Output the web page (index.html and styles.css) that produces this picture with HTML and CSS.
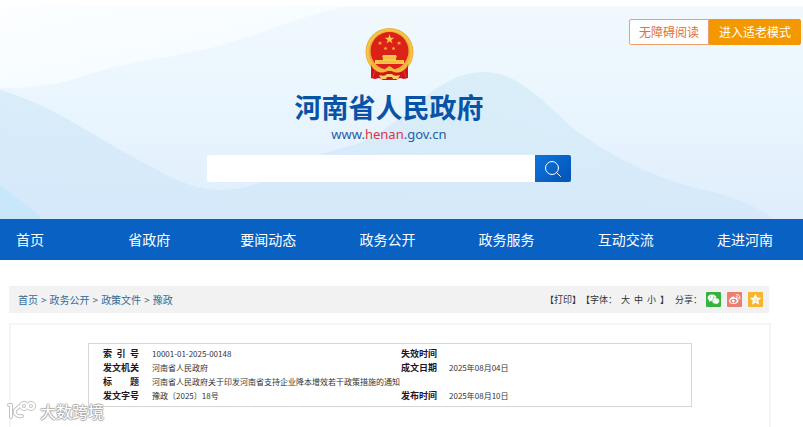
FILE: index.html
```html
<!DOCTYPE html>
<html lang="zh-CN">
<head>
<meta charset="utf-8">
<meta name="viewport" content="width=device-width, initial-scale=1">
<title>河南省人民政府</title>
<link rel="stylesheet" href="styles.css">
</head>
<body>
<header class="banner">
  <svg class="banner-art" viewBox="0 0 803 213" preserveAspectRatio="none" aria-hidden="true">
    <defs>
      <linearGradient id="sky" x1="0" y1="0" x2="0" y2="1">
        <stop offset="0" stop-color="#f1f9fd"/>
        <stop offset="0.5" stop-color="#e9f5fe"/>
        <stop offset="1" stop-color="#dfedfc"/>
      </linearGradient>
      <linearGradient id="glow" x1="0" y1="0" x2="0.9" y2="1">
        <stop offset="0" stop-color="#fcfeff"/>
        <stop offset="0.6" stop-color="#f6fcff"/>
        <stop offset="1" stop-color="#f1f9fd" stop-opacity="0"/>
      </linearGradient>
      <linearGradient id="hill" x1="0" y1="0" x2="0" y2="1">
        <stop offset="0" stop-color="#d9edf8"/>
        <stop offset="1" stop-color="#d6e9fa"/>
      </linearGradient>
      <linearGradient id="ridge" x1="0.6" y1="0" x2="0.3" y2="1">
        <stop offset="0" stop-color="#d9eef8"/>
        <stop offset="0.6" stop-color="#d6eafa"/>
        <stop offset="1" stop-color="#d5e9fa"/>
      </linearGradient>
    </defs>
    <rect width="803" height="213" fill="url(#sky)"/>
    <path d="M0 0H350C310 8 280 20 250 30C190 52 140 52 90 68C55 80 30 83 0 82Z" fill="url(#glow)"/>
    <path d="M0 84C50 98 90 128 135 152C165 168 190 184 220 184C270 184 300 150 350 140C400 128 430 66 484 66C520 66 545 98 575 124C610 150 655 172 700 183C735 190 760 203 775 213H0Z" fill="url(#ridge)" opacity="0.94"/>
    <path d="M330 150C400 125 430 105 500 112C560 120 590 160 680 213H180C240 195 270 170 330 150Z" fill="url(#hill)" opacity="0.5"/>
    <path d="M0 180C15 190 30 201 42 213H0Z" fill="#c9e7fa"/>
  </svg>

  <div class="modes">
    <button type="button" class="mode">无障碍阅读</button>
    <button type="button" class="mode mode-senior">进入适老模式</button>
  </div>

  <div class="brand">
    <svg class="emblem" viewBox="0 0 49 52" role="img" aria-label="国徽">
      <circle cx="24.500" cy="24" r="24" fill="#ecb038"/>
      <circle cx="24.500" cy="24" r="22" fill="none" stroke="#f5c54c" stroke-width="2"/>
      <circle cx="24.500" cy="23" r="19" fill="#dc2119"/>
      <path d="M24.500 6L25.600 9.700H29.300L26.300 12L27.500 15.500L24.500 13.300L21.500 15.500L22.700 12L19.700 9.700H23.400Z" fill="#f9cc4a"/>
      <path d="M15 13l.7 1.400 1.600.1-1.200 1 .4 1.500-1.500-.9-1.400.9.400-1.500-1.200-1 1.600-.1zM34 13l.7 1.400 1.600.1-1.200 1 .4 1.500-1.500-.9-1.400.9.400-1.500-1.200-1 1.600-.1zM20.500 18.500l.6 1.200 1.400.1-1 .9.300 1.300-1.300-.7-1.300.7.300-1.300-1-.9 1.400-.1zM28.500 18.500l.6 1.200 1.400.1-1 .9.300 1.300-1.300-.7-1.300.7.300-1.300-1-.9 1.400-.1z" fill="#f2b13e"/>
      <path d="M18 27h13l1 2h-1v3h8v4H10v-4h8v-3h-1z" fill="#f8c84a"/>
      <path d="M17 30h15M13 34h23" stroke="#e5a12f" stroke-width="0.600"/>
      <path d="M6 36C11 41 15 44 20 43H29C34 44 38 41 43 36L43 50L39 51L35 50L31 52H18L14 50L10 51L6 50Z" fill="#cc1715"/>
      <path d="M7 35C11 41 17 43 20 41L24.500 38L29 41C32 43 38 41 42 35L43 37C40 43 34 46 29 44L26 43H23L20 44C15 46 9 43 6 37Z" fill="#f3b93e"/>
      <path d="M14 47Q20 49 22 46H27Q29 49 35 47L33 51H28L27 49H22L21 51H16Z" fill="#f7ce63"/>
      <path d="M10 43L8 49M39 43L41 49" stroke="#e5402c" stroke-width="1"/>
    </svg>
    <h1 class="title">河南省人民政府</h1>
    <p class="domain">www.<span class="domain-name">henan</span>.gov.cn</p>
  </div>

  <form class="search" role="search">
    <input class="search-field" type="search" aria-label="搜索">
    <button class="search-button" type="submit" aria-label="搜索">
      <svg viewBox="0 0 18 18" class="search-icon" aria-hidden="true">
        <circle cx="8" cy="8" r="6.500"/>
        <path d="M12.500 12.500L16.500 16.500"/>
      </svg>
    </button>
  </form>
</header>

<nav class="nav" aria-label="主导航">
  <a href="#">首页</a>
  <a href="#">省政府</a>
  <a href="#">要闻动态</a>
  <a href="#">政务公开</a>
  <a href="#">政务服务</a>
  <a href="#">互动交流</a>
  <a href="#">走进河南</a>
</nav>

<main class="page">
  <div class="toolbar">
    <nav class="crumbs" aria-label="当前位置">
      <a href="#">首页</a><span>&gt;</span><a href="#">政务公开</a><span>&gt;</span><a href="#">政策文件</a><span>&gt;</span><a href="#">豫政</a>
    </nav>
    <div class="tools">
      <button type="button" class="tool">【打印】</button>
      <div class="sizes">
        <span>【字体：</span>
        <button type="button" class="tool">大</button>
        <button type="button" class="tool">中</button>
        <button type="button" class="tool">小</button>
        <span>】</span>
      </div>
      <span class="share-label">分享：</span>
      <div class="share">
        <a href="#" class="share-link wechat" aria-label="微信">
          <svg viewBox="0 0 15 15" aria-hidden="true">
            <path d="M6 2.500C3.500 2.500 1.700 4 1.700 5.900c0 1.100.6 2 1.600 2.600L3 10l1.700-.9c.4.100.8.200 1.300.2 2.500 0 4.400-1.500 4.400-3.400S8.500 2.500 6 2.500z" fill="#fff"/>
            <path d="M9.800 6c-2.100 0-3.800 1.300-3.800 3s1.700 3 3.800 3c.4 0 .8 0 1.200-.2l1.400.8-.3-1.300c.9-.5 1.400-1.400 1.400-2.300 0-1.700-1.600-3-3.700-3z" fill="#fff" stroke="#36b23e" stroke-width="0.500"/>
            <circle cx="4.600" cy="5" r="0.500" fill="#36b23e"/><circle cx="7.400" cy="5" r="0.500" fill="#36b23e"/>
            <circle cx="8.600" cy="8.300" r="0.400" fill="#36b23e"/><circle cx="11" cy="8.300" r="0.400" fill="#36b23e"/>
          </svg>
        </a>
        <a href="#" class="share-link weibo" aria-label="微博">
          <svg viewBox="0 0 15 15" aria-hidden="true">
            <path d="M6 4.500c-2 .5-4 2.700-4 4.500 0 1.900 2 3 4.500 3 2.800 0 5-1.500 5-3.200 0-1-.7-1.500-1.500-1.700.4-1.200-.5-1.700-2.500-.9.300-1.200-.2-1.900-1.500-1.700z" fill="#fff"/>
            <ellipse cx="6.500" cy="9" rx="3.200" ry="2.100" fill="#ea7f70" transform="rotate(-8 6.500 9)"/>
            <circle cx="6.300" cy="9.100" r="1.400" fill="#fff"/>
            <path d="M9.300 4.800c1.400-.3 2.200.5 1.900 1.800M9.200 2.700c2.600-.4 4.200 1.500 3.700 4.200" fill="none" stroke="#fff" stroke-width="0.900" stroke-linecap="round"/>
          </svg>
        </a>
        <a href="#" class="share-link qzone" aria-label="QQ空间">
          <svg viewBox="0 0 15 15" aria-hidden="true">
            <path d="M7.500 2.500L9 5.800l3.600.4-2.700 2.400.8 3.600-3.200-1.900-3.200 1.900.8-3.600-2.700-2.400L6 5.800z" fill="#fff" stroke="#fff" stroke-linejoin="round" stroke-width="0.600"/>
            <path d="M6.200 7h2.600L6.700 9h2.300" fill="none" stroke="#f6b52b" stroke-width="0.500"/>
          </svg>
        </a>
      </div>
    </div>
  </div>

  <section class="document">
    <table class="meta">
      <colgroup><col class="col-label-first"><col class="col-value"><col class="col-label"><col></colgroup>
      <tbody>
        <tr><th scope="row"><span class="label">索 引 号</span></th><td>10001-01-2025-00148</td><th scope="row"><span class="label">失效时间</span></th><td></td></tr>
        <tr><th scope="row"><span class="label">发文机关</span></th><td>河南省人民政府</td><th scope="row"><span class="label">成文日期</span></th><td>2025年08月04日</td></tr>
        <tr><th scope="row"><span class="label">标 题</span></th><td colspan="3">河南省人民政府关于印发河南省支持企业降本增效若干政策措施的通知</td></tr>
        <tr><th scope="row"><span class="label">发文字号</span></th><td>豫政〔2025〕18号</td><th scope="row"><span class="label">发布时间</span></th><td>2025年08月10日</td></tr>
      </tbody>
    </table>
  </section>
</main>

<div class="watermark">
  <svg class="watermark-logo" viewBox="0 0 30 20" aria-hidden="true">
    <g fill="none" stroke-linecap="round" stroke-linejoin="round">
      <g stroke="#c2c2c2" stroke-width="4">
        <path d="M2 4H4V16M14 4L8 9C7 13 10 16 15 15"/>
        <circle cx="17" cy="5" r="3"/><circle cx="24" cy="5" r="3"/>
      </g>
      <g stroke="#fff" stroke-width="2">
        <path d="M2 4H4V16M14 4L8 9C7 13 10 16 15 15"/>
        <circle cx="17" cy="5" r="3"/><circle cx="24" cy="5" r="3"/>
      </g>
    </g>
  </svg>
  <span>大数跨境</span>
</div>
</body>
</html>
```
FILE: styles.css
```css
* {
  box-sizing: border-box;
}

body {
  display: flex;
  flex-direction: column;
  min-height: 100vh;
  margin: 0;
  padding-top: 6px;
  position: relative;
  background: #fff;
  color: #333;
  font-family: "Noto Sans CJK SC", "Noto Sans", sans-serif;
}

a {
  color: inherit;
  text-decoration: none;
}

button {
  margin: 0;
  padding: 0;
  border: 0;
  background: none;
  color: inherit;
  font: inherit;
  cursor: pointer;
}

/* Banner */
.banner {
  position: relative;
  display: flex;
  flex-direction: column;
  align-items: center;
  padding: 22px 25px 37px 0;
}

.banner-art {
  position: absolute;
  inset: 0;
  width: 100%;
  height: 100%;
}

.modes {
  position: absolute;
  top: 13px;
  right: 2px;
  display: flex;
  height: 26px;
  font-size: 12px;
  line-height: 24px;
}

.mode {
  width: 80px;
  border: 1px solid #eda06c;
  border-radius: 2px 0 0 2px;
  background: #fff;
  color: #e0713a;
}

.mode-senior {
  width: 92px;
  border-color: #f39800;
  border-radius: 0 2px 2px 0;
  background: #f39800;
  color: #fff;
}

.brand {
  position: relative;
  display: flex;
  flex-direction: column;
  align-items: center;
}

.emblem {
  width: 49px;
  height: 52px;
}

.title {
  margin: 11px 0 0;
  color: #0853a6;
  font-size: 27px;
  font-weight: 700;
  line-height: 32px;
}

.domain {
  margin: 1px 0 0;
  color: #1d5fa8;
  font-family: "Noto Sans", sans-serif;
  font-size: 13px;
  line-height: 20px;
}

.domain-name {
  color: #dc3545;
}

.search {
  position: relative;
  display: flex;
  width: 364px;
  max-width: 90%;
  height: 27px;
  margin-top: 11px;
}

.search-field {
  flex: 1;
  min-width: 0;
  padding: 0 8px;
  border: 0;
  border-radius: 2px 0 0 2px;
  outline: 0;
  background: #fff;
  font: inherit;
  font-size: 12px;
}

.search-button {
  display: grid;
  place-items: center;
  width: 36px;
  border-radius: 0 2px 2px 0;
  background: linear-gradient(135deg, #0d74de, #0453b4);
}

.search-icon {
  width: 18px;
  height: 18px;
  fill: none;
  stroke: #fff;
  stroke-width: 1;
  stroke-linecap: round;
}

/* Main navigation */
.nav {
  display: grid;
  grid-template-columns: 112fr 112fr 119fr 119fr 119fr 119fr 86fr;
  padding-left: 16px;
  background: #0962c3;
  color: #fff;
  font-size: 14px;
  line-height: 41px;
  white-space: nowrap;
}

/* Page content */
.page {
  flex: 1;
  display: flex;
  flex-direction: column;
  gap: 10px;
  padding: 26px 32px 0 9px;
}

.toolbar {
  display: flex;
  align-items: center;
  justify-content: space-between;
  height: 27px;
  margin-right: 2px;
  padding: 0 6px 0 9px;
  background: #f2f2f2;
  white-space: nowrap;
}

.crumbs {
  display: flex;
  gap: 3px;
  color: #356a94;
  font-size: 10px;
}

.tools,
.sizes,
.share {
  display: flex;
  align-items: center;
}

.tools {
  font-size: 9px;
}

.sizes {
  gap: 4px;
}

.share-label {
  margin: 0 4px 0 6px;
}

.share {
  gap: 6px;
}

.share-link {
  display: block;
  width: 15px;
  height: 15px;
  border-radius: 1px;
}

.share-link svg {
  display: block;
}

.wechat {
  background: #36b23e;
}

.weibo {
  background: #ea7f70;
}

.qzone {
  background: #f6b52b;
}

.document {
  flex: 1;
  padding: 18px 77px 18px;
  border: 2px solid #f5f5f5;
  border-bottom: 0;
}

.meta {
  width: 100%;
  padding: 3px 0;
  border: 1px solid #d6d6d6;
  border-spacing: 0;
  table-layout: fixed;
  font-size: 8px;
  line-height: 14px;
}

.meta th,
.meta td {
  height: 14px;
  padding: 0;
  text-align: left;
  white-space: nowrap;
}

.meta th {
  color: #22141f;
  font-size: 9px;
}

.meta th:first-child {
  padding-left: 14px;
}

.col-label-first {
  width: 63px;
}

.col-value {
  width: 249px;
}

.col-label {
  width: 48px;
}

.label {
  display: block;
  width: 36px;
  text-align-last: justify;
}

/* Source mark over the page corner */
.watermark {
  position: absolute;
  bottom: 5px;
  left: 7px;
  display: flex;
  align-items: center;
  gap: 3px;
  color: #fff;
  font-size: 16px;
  line-height: 22px;
  text-shadow: 1px 0 1px #aaa, -1px 0 1px #aaa, 0 1px 1px #aaa, 0 -1px 1px #aaa;
}

.watermark-logo {
  width: 30px;
  height: 20px;
}
```
